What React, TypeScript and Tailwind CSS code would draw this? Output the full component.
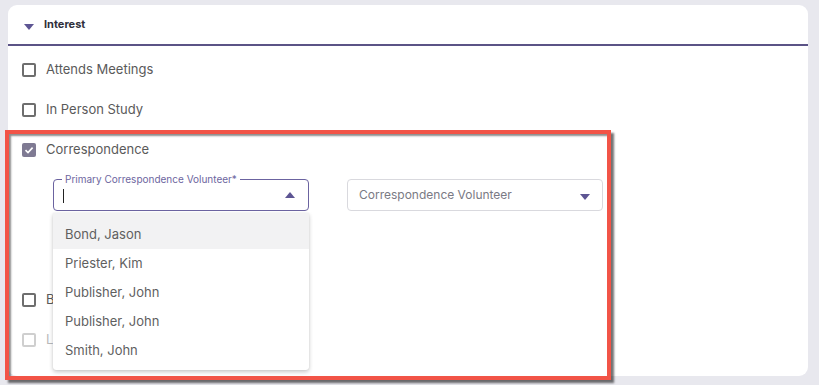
import React from 'react'

const font = { fontFamily: 'Inter, "Noto Sans", sans-serif' }

const Box = ({ checked = false, faded = false }: { checked?: boolean; faded?: boolean }) => {
  if (checked) {
    return (
      <div className="w-[14px] h-[14px] rounded-[2px] bg-[#7f7a93] flex items-center justify-center">
        <svg width="10" height="10" viewBox="0 0 10 10">
          <path d="M1.5 5.2 L4 7.6 L8.6 2.6" stroke="white" strokeWidth="1.6" fill="none" />
        </svg>
      </div>
    )
  }
  return (
    <div
      className={
        faded
          ? 'w-[14px] h-[14px] rounded-[2px] border-2 border-[#cfcfcf]'
          : 'w-[14px] h-[14px] rounded-[2px] border-2 border-[#6e6e6e]'
      }
    />
  )
}

const Row = ({ label, checked, faded }: { label: string; checked?: boolean; faded?: boolean }) => (
  <div className="h-[40px] flex items-center pl-[14px] gap-[10px]">
    <Box checked={checked} faded={faded} />
    <span className={faded ? 'text-[13px] text-[#b9b9b9]' : 'text-[13px] text-[#5a5a5a]'}>{label}</span>
  </div>
)

const names = ['Priester, Kim', 'Publisher, John', 'Publisher, John', 'Smith, John']

export default function App() {
  return (
    <div className="relative w-[819px] h-[385px] bg-[#e8e8ee] pt-[5px] pl-[8px] overflow-hidden" style={font}>
      <div className="w-[800px] h-[371px] bg-white rounded-[9px]">
        {/* header */}
        <div className="h-[41px] border-b-2 border-[#5b5386] flex items-center pl-[16px] gap-[10px]">
          <svg width="10" height="6" viewBox="0 0 10 6" className="mt-[5px]">
            <path d="M0 0 L10 0 L5 6 Z" fill="#5d5593" />
          </svg>
          <span className="text-[11px] font-bold text-[#2f2f3b]">Interest</span>
        </div>

        <div className="pt-[4px]">
          <Row label="Attends Meetings" />
          <Row label="In Person Study" />
          <Row label="Correspondence" checked />

          <div className="flex pl-[45px] gap-[38px] mt-[9px] h-[101px]">
            <div className="relative w-[256px] h-[32px] border border-[#6b63a0] rounded-[4px] flex items-center pl-[9px] pr-[13px]">
              <span className="absolute -top-[8px] left-[8px] bg-white px-[3px] text-[10px] text-[#6d66a0] leading-[14px]">
                Primary Correspondence Volunteer*
              </span>
              <div className="w-[1px] h-[14px] bg-[#222] mt-[2px]" />
              <div className="flex-1" />
              <svg width="10" height="6" viewBox="0 0 10 6">
                <path d="M0 6 L10 6 L5 0 Z" fill="#5d5593" />
              </svg>
            </div>
            <div className="w-[256px] h-[32px] border border-[#d9d9de] rounded-[4px] flex items-center pl-[11px] pr-[12px]">
              <span className="flex-1 text-[12px] text-[#7a7a84]">Correspondence Volunteer</span>
              <svg width="10" height="6" viewBox="0 0 10 6" className="mt-[4px]">
                <path d="M0 0 L10 0 L5 6 Z" fill="#5d5593" />
              </svg>
            </div>
          </div>

          <Row label="B" />
          <Row label="Li" faded />
        </div>
      </div>

      {/* open dropdown list */}
      <div className="absolute left-[53px] top-[213px] w-[256px] bg-white shadow-[0_2px_4px_rgba(0,0,0,0.22),0_0_1px_rgba(0,0,0,0.15)] rounded-b-[3px] pb-[5px]">
        <div className="h-[36px] pt-[7px] flex items-center pl-[12px] bg-[#f2f2f3] text-[13px] text-[#5f5f5f]">Bond, Jason</div>
        {names.map((n, i) => (
          <div key={i} className="h-[29px] flex items-center pl-[12px] text-[13px] text-[#5f5f5f]">
            {n}
          </div>
        ))}
      </div>

      {/* annotation highlight */}
      <div className="absolute left-[5px] top-[130px] w-[606px] h-[250px] border-4 border-[#f25447] shadow-[3px_3px_2px_rgba(0,0,0,0.55),inset_2px_2px_2px_rgba(0,0,0,0.45)]" />
    </div>
  )
}
